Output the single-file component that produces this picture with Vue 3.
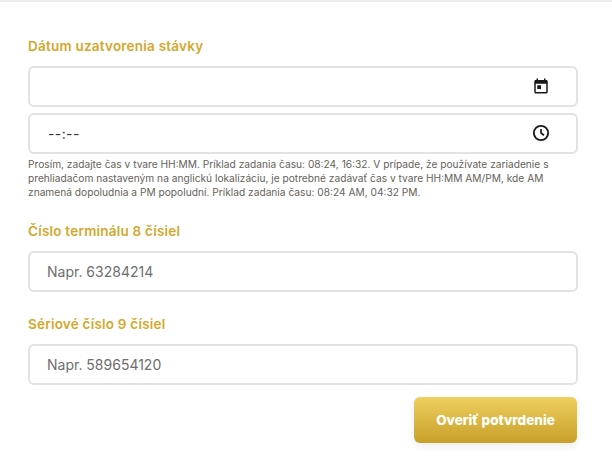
<template>
  <div class="page">
    <form class="form" @submit.prevent>
      <label class="field-label first">Dátum uzatvorenia stávky</label>
      <div class="input-box">
        <input class="input" type="text" v-model="date" />
        <svg class="input-icon" viewBox="0 0 24 24" width="18" height="18">
          <path d="M19 4h-1V2h-2v2H8V2H6v2H5c-1.1 0-2 .9-2 2v14c0 1.1.9 2 2 2h14c1.1 0 2-.9 2-2V6c0-1.1-.9-2-2-2zm0 16H5V9h14v11z" fill="#1a1a1a" />
          <rect x="7" y="11" width="5" height="5" fill="#1a1a1a" />
        </svg>
      </div>
      <div class="input-box second">
        <input class="input time" type="text" v-model="time" />
        <svg class="input-icon" viewBox="0 0 24 24" width="18" height="18">
          <circle cx="12" cy="12" r="9.5" fill="none" stroke="#1a1a1a" stroke-width="2.5" />
          <path d="M12 6.5V12l4 3" fill="none" stroke="#1a1a1a" stroke-width="2.2" />
        </svg>
      </div>
      <p class="hint">
        Prosím, zadajte čas v tvare HH:MM. Príklad zadania času: 08:24, 16:32. V prípade, že používate zariadenie s<br />
        prehliadačom nastaveným na anglickú lokalizáciu, je potrebné zadávať čas v tvare HH:MM AM/PM, kde AM<br />
        znamená dopoludnia a PM popoludní. Príklad zadania času: 08:24 AM, 04:32 PM.
      </p>

      <label class="field-label after-hint">Číslo terminálu 8 čísiel</label>
      <div class="input-box">
        <input class="input" type="text" placeholder="Napr. 63284214" />
      </div>

      <label class="field-label">Sériové číslo 9 čísiel</label>
      <div class="input-box">
        <input class="input" type="text" placeholder="Napr. 589654120" />
      </div>

      <div class="actions">
        <button class="submit" type="submit">Overiť potvrdenie</button>
      </div>
    </form>
  </div>
</template>

<script setup>
import { ref } from 'vue';

const date = ref('');
const time = ref('--:--');
</script>

<style>
html, body {
  background: #fff;
  overflow: hidden;
}
</style>

<style scoped>
.page {
  width: 612px;
  height: 471px;
  box-sizing: border-box;
  border-top: 2px solid #ececec;
  font-family: "Inter", "Open Sans", sans-serif;
}

.form {
  display: flex;
  flex-direction: column;
  padding: 0 34px 0 28px;
}

.field-label {
  display: block;
  height: 18px;
  line-height: 18px;
  margin-top: 23px;
  margin-bottom: 11px;
  font-size: 13.5px;
  font-weight: 600;
  letter-spacing: 0.22px;
  color: #d4a72c;
}

.field-label.first {
  margin-top: 35px;
}

.input-box {
  position: relative;
  height: 41px;
}

.input-box.second {
  margin-top: 6px;
}

.input {
  width: 100%;
  height: 100%;
  box-sizing: border-box;
  border: 2px solid #e2e2e2;
  border-radius: 6px;
  padding: 0 17px;
  background: #fff;
  outline: none;
  font-family: inherit;
  font-size: 14px;
  color: #5f5f5f;
}

.input::placeholder {
  color: #6e6e6e;
  opacity: 1;
}

.input.time {
  letter-spacing: 0.4px;
  color: #333;
  padding-left: 18px;
}

.input-icon {
  position: absolute;
  right: 28px;
  top: 11px;
}

.hint {
  margin: 3px 0 0;
  font-size: 10.2px;
  line-height: 14px;
  color: #66625a;
  white-space: nowrap;
}

.actions {
  display: flex;
  justify-content: flex-end;
  margin-top: 12px;
  padding-right: 1px;
}

.submit {
  width: 163px;
  height: 46px;
  border: none;
  border-radius: 6px;
  background: linear-gradient(180deg, #eed05f 0%, #c99f2a 100%);
  box-shadow: 0 3px 8px rgba(0, 0, 0, 0.08);
  color: #fff;
  font-family: inherit;
  font-size: 13.5px;
  font-weight: 800;
}
</style>
